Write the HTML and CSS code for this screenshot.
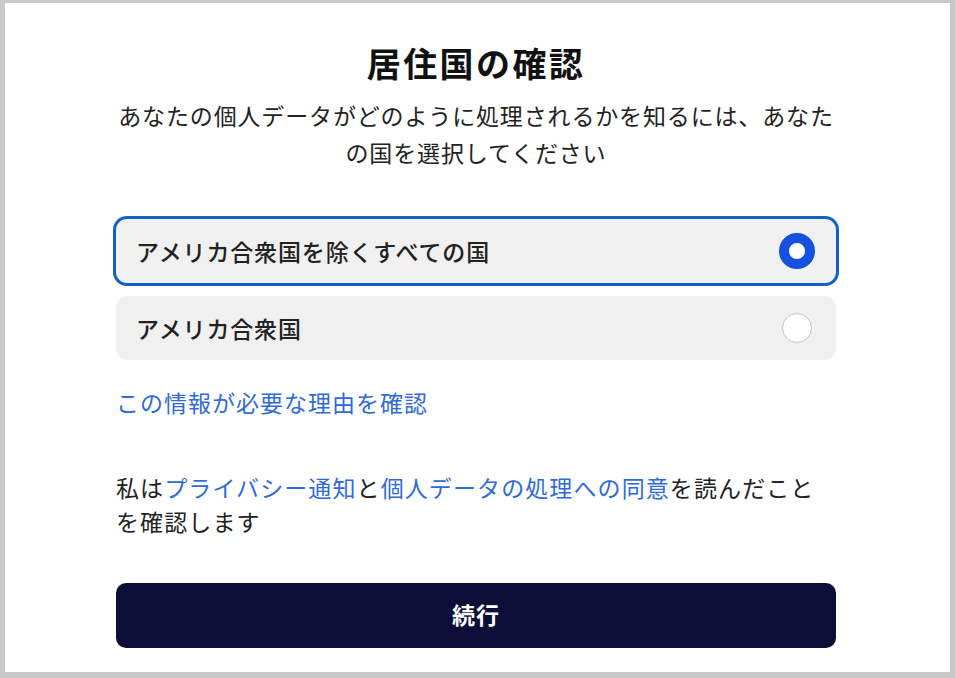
FILE: index.html
```html
<!DOCTYPE html>
<html lang="ja">
<head>
<meta charset="utf-8">
<link rel="stylesheet" href="styles.css">
</head>
<body>
<div class="page">
  <div class="content">
    <h1 class="title">居住国の確認</h1>
    <p class="subtitle">あなたの個人データがどのように処理されるかを知るには、あなたの国を選択してください</p>
    <div class="options">
      <div class="option selected">
        <span class="option-label">アメリカ合衆国を除くすべての国</span>
        <span class="radio on"></span>
      </div>
      <div class="option">
        <span class="option-label">アメリカ合衆国</span>
        <span class="radio"></span>
      </div>
    </div>
    <a class="why" href="#">この情報が必要な理由を確認</a>
    <p class="consent">私は<a href="#">プライバシー通知</a>と<a href="#">個人データの処理への同意</a>を読んだことを確認します</p>
    <button class="continue">続行</button>
  </div>
</div>
</body>
</html>
```

FILE: styles.css
```css
html {
  background: #c8c8c8;
}
body {
  margin: 0;
  font-family: "Noto Sans CJK JP", "Noto Sans", sans-serif;
  color: #222;
}
.page {
  margin: 3px 5px 6px 5px;
  height: 669px;
  background: #fff;
  box-sizing: border-box;
  padding: 38px 114px 0 111px;
  overflow: hidden;
}
.content {
  width: 720px;
  display: flex;
  flex-direction: column;
}
.title {
  margin: 0;
  font-size: 34px;
  line-height: 44px;
  font-weight: 700;
  color: #111;
  text-align: center;
  letter-spacing: 2.4px;
}
.subtitle {
  margin: 12px 0 0;
  font-size: 23px;
  line-height: 37px;
  letter-spacing: 0.85px;
  text-align: center;
  color: #222;
}
.options {
  margin-top: 48px;
  display: flex;
  flex-direction: column;
  gap: 13px;
}
.option {
  height: 64px;
  border-radius: 11px;
  background: #f0f0f0;
  display: flex;
  align-items: center;
  justify-content: space-between;
  padding: 0 24px 0 20px;
}
.option.selected {
  box-shadow: 0 0 0 3px #1560c6;
}
.option-label {
  font-size: 23px;
  font-weight: 500;
  letter-spacing: 0.85px;
  color: #222;
}
.radio {
  width: 28px;
  height: 28px;
  border-radius: 50%;
  border: 1px solid #c4c4c4;
  background: #fff;
}
.radio.on {
  width: 16px;
  height: 16px;
  border: 10px solid #1650df;
  margin-right: -3px;
}
.why {
  margin-top: 25px;
  font-size: 23px;
  line-height: 34px;
  letter-spacing: 1px;
  color: #2f6ad8;
  text-decoration: none;
  align-self: flex-start;
}
.consent {
  margin: 51px 0 0;
  font-size: 23px;
  line-height: 34px;
  letter-spacing: 1.1px;
  color: #222;
  padding-right: 20px;
}
.consent a {
  color: #2f6ad8;
  text-decoration: none;
}
.continue {
  margin-top: 45px;
  height: 65px;
  border: none;
  border-radius: 10px;
  background: #0d0e38;
  color: #fff;
  font-family: inherit;
  font-size: 23px;
  font-weight: 700;
  letter-spacing: 1px;
  padding: 0 0 4px;
}
```
